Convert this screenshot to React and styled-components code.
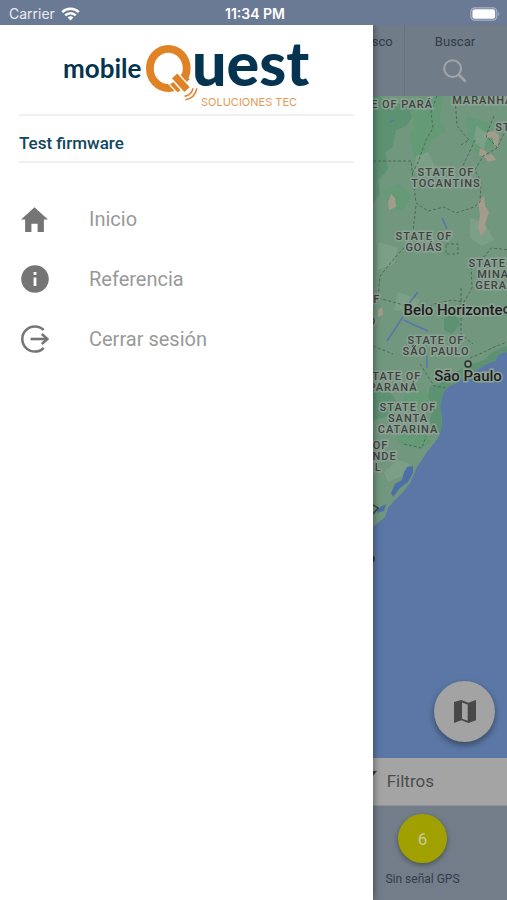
import React, { useState } from 'react';
import styled, { createGlobalStyle } from 'styled-components';
import { IoMdHome, IoMdInformationCircle } from 'react-icons/io';

function App() {

    const [menuOpen, setMenuOpen] = useState(true);

    return (
        <Page>
            <GlobalStyle />

            <StatusBar>
                <Carrier>
                    Carrier
                    <WifiIcon />
                </Carrier>
                <Time>11:34 PM</Time>
                <BatteryWrap>
                    <BatteryIcon />
                </BatteryWrap>
            </StatusBar>

            <Content>
                <Toolbar>
                    <Tool />
                    <Tool />
                    <Tool />
                    <Tool>Auto-refresco</Tool>
                    <Tool divided>
                        Buscar
                        <SearchIcon />
                    </Tool>
                </Toolbar>

                <MapArea>
                    <BrazilMap />
                    <MapButton aria-label="Tipo de mapa">
                        <MapIcon />
                    </MapButton>
                </MapArea>

                <FilterBar>
                    <FilterButton>
                        <FunnelIcon />
                        Filtros
                    </FilterButton>
                </FilterBar>

                <Summary>
                    <SummaryItem />
                    <SummaryItem />
                    <SummaryItem>
                        <Count>6</Count>
                        Sin señal GPS
                    </SummaryItem>
                </Summary>

                <Drawer show={menuOpen}>
                    <LogoWrap>
                        <Logo />
                    </LogoWrap>
                    <UserName>Test firmware</UserName>
                    <Menu>
                        <MenuLink href="#" onClick={() => setMenuOpen(false)}>
                            <IoMdHome size={33} />
                            Inicio
                        </MenuLink>
                        <MenuLink href="#">
                            <IoMdInformationCircle size={34} />
                            Referencia
                        </MenuLink>
                        <MenuLink href="#">
                            <LogoutIcon />
                            Cerrar sesión
                        </MenuLink>
                    </Menu>
                </Drawer>
            </Content>
        </Page>
    )
}

export default App

function WifiIcon() {
    return (
        <svg width="19" height="14" viewBox="0 0 19 14" fill="none" stroke="#fff" strokeWidth="2.5">
            <path d="M1.2 5.2a11.8 11.8 0 0 1 16.6 0" />
            <path d="M4.2 8.4a7.5 7.5 0 0 1 10.6 0" />
            <path d="M9.5 13.6l-2.9-3a4.1 4.1 0 0 1 5.8 0z" fill="#fff" stroke="none" />
        </svg>
    )
}

function BatteryIcon() {
    return (
        <svg width="31" height="14" viewBox="0 0 31 14">
            <rect x="0.8" y="0.8" width="26" height="12.4" rx="4" fill="none" stroke="#a9b3c4" strokeWidth="1.2" />
            <rect x="2.4" y="2.2" width="22.8" height="9.6" rx="2.4" fill="#fff" />
            <path d="M28.4 4.8q2 2.2 0 4.4z" fill="#a9b3c4" />
        </svg>
    )
}

function SearchIcon() {
    return (
        <svg width="24" height="24" viewBox="0 0 24 24" fill="none" stroke="#a3a5a8" strokeWidth="2">
            <circle cx="9.6" cy="9.6" r="8.4" />
            <path d="M15.6 15.6l7 7" strokeWidth="2.6" />
        </svg>
    )
}

function MapIcon() {
    return (
        <svg width="22" height="23" viewBox="0 0 22 23" fill="#484848">
            <path fillRule="evenodd" d="M0 2l7.3-2 7.2 2.7L22 0v20.3l-7.5 2.6-7.2-2.6L0 22.9zM8 2.4v16.3l5.7 2.1V4.5z" />
        </svg>
    )
}

function FunnelIcon() {
    return (
        <svg width="24" height="20" viewBox="0 0 24 20" fill="#3c3c3c">
            <path d="M0 0h24l-9 11v9l-6-4v-5z" />
        </svg>
    )
}

function LogoutIcon() {
    return (
        <svg width="28" height="28" viewBox="0 0 28 28" fill="none" stroke="#757575" strokeWidth="2.5">
            <path d="M22.7 5A12.6 12.6 0 1 0 22.7 23" />
            <path d="M9.5 14H26" strokeWidth="2.6" />
            <path d="M20.8 9l5.6 5-5.6 5" />
        </svg>
    )
}

function Logo() {
    return (
        <svg width="250" height="68" viewBox="0 0 250 68" role="img" aria-label="mobileQuest soluciones tec">
            <g fill="#04344f" fontFamily="Lato, sans-serif">
                <text x="1" y="36" fontSize="26" fontWeight="700">mobile</text>
                <text x="130" y="44" fontSize="61" fontWeight="900">uest</text>
            </g>
            <ellipse cx="106.3" cy="26.4" rx="18.4" ry="19.6" fill="none" stroke="#e08327" strokeWidth="7.8" />
            {/* plug */}
            <g transform="translate(119 41) rotate(48)">
                <path d="M-9-5.2H9V5.2H-9z" fill="#fff" />
                <path d="M-8 8.8H8V10.2H-8z" fill="#fff" />
                <path d="M-9.5-3.6H9V3.6H-9.5z" fill="#e08327" />
                <path d="M-6.5-9H3v3.8h-9.5zM-6 5.2H5v3.6H-6z" fill="#e08327" />
            </g>
            <g fill="none" stroke="#e08327" strokeWidth="1.6">
                <path d="M122.6 54.4q7-1.4 8.4-8" />
                <path d="M123.4 57.8q9.6-1.6 11.4-11.4" />
            </g>
            <text x="139" y="64" fontSize="11" fill="#e39a55" fontFamily="Inter, sans-serif">SOLUCIONES TEC</text>
        </svg>
    )
}

const stateLabels = [
    { x: 402, y: 12, lines: ['E OF PARÁ'] },
    { x: 487, y: 8, lines: ['MARANHÃO'] },
    { x: 503, y: 35, lines: ['ST'] },
    { x: 446, y: 80, lines: ['STATE OF', 'TOCANTINS'] },
    { x: 424, y: 144, lines: ['STATE OF', 'GOIÁS'] },
    { x: 497, y: 171, lines: ['STATE OF', 'MINAS', 'GERAIS'] },
    { x: 352, y: 207, lines: ['STATE OF'] },
    { x: 352, y: 229, lines: ['GROSSO'] },
    { x: 436, y: 248, lines: ['STATE OF', 'SÃO PAULO'] },
    { x: 393, y: 284, lines: ['STATE OF', 'PARANÁ'] },
    { x: 408, y: 315, lines: ['STATE OF', 'SANTA', 'CATARINA'] },
    { x: 360, y: 353, lines: ['STATE OF', 'RIO GRANDE', 'DO SUL'] },
]

function BrazilMap() {
    return (
        <MapSvg viewBox="0 0 507 662" preserveAspectRatio="xMaxYMin slice">
            <rect width="507" height="662" fill="#5b77a5" />
            <path
                fill="#71987f"
                d="M0 0H507V256L499 258 495 265 486 268 477 274 466 279 457 287 449 290 443 297 440 311 442 324 441 335 438 342 427 356 417 371 410 387 403 396 393 406 388 412 385 421 373 431 340 470 0 490z"
            />
            {/* forest */}
            <g fill="#5c9271">
                <path d="M340 0h40l6 8h22l4 14-6 8-10 4-4 18-6 4 2 18-10 10 2 14-8 10-32 10z" />
                <path d="M507 256L499 258 495 265 486 268 477 274 466 279 457 287 449 290 443 297 440 311 442 324 441 335 436 340 430 326 432 310 428 300 430 290 440 288 446 278 460 274 472 268 484 264 492 256 507 250z" />
                <path d="M373 290l14 2 10 14-8 14-16 4zM444 220l12-4 4 12-8 10-8-4z" />
            </g>
            <g fill="#659a77">
                <path d="M408 8l16-8h20l-4 22 6 14-14 8-8 22-10-4-4-22 4-12zM466 20l22 6 8 22-18 10-10-14zM384 94l16-6 12 12-8 14-16-2z" />
                <path d="M404 300l22-6 4 12-14 8-14-4zM396 336l30 2 6 8-14 8-20-6z" />
            </g>
            <g fill="#7c9f87">
                <path d="M416 60l12-4 8 16-10 10-12-6zM476 30l12 8-4 16-10-8zM378 146l20 6-4 16-16 6zM470 122l14 4 10 18-12 6-12-8z" />
                <path d="M398 196l22 8-6 12-20-2zM398 364l12 4-8 12-14 6-4-10z" />
            </g>
            <g fill="#a39c8c">
                <path d="M483 40l5-4 6-1 5 4-1 12-4-1-1-8-7-1zM478 106l6-6 1 10 4 6-4 12 1 6-5 6-3-9 2-12zM388 106l3-8 4 4 1 9-7 3zM480 52l7 4-2 5-6-2zM378 214l4-3 1 8-5 2zM484 60l8-2 4 6-8 2z" />
            </g>
            {/* rivers and lagoons */}
            <path fill="#4d6fa8" d="M404 376l3-5 6-1 0 7-5 9-8 6-7 9-2-4 4-9 7-4zM377 413l9-5-2 7-7 2z" />
            <g fill="none" stroke="#5776a7" strokeWidth="1.5">
                <path d="M387 245l8-12 11-17 4-10 8-10M404 224l8 4 16 7M442 122l5 11M390 26l4-2M427 260v12" />
            </g>
            <g fill="none" stroke="#4f6a5a" strokeWidth="1" strokeDasharray="3 2">
                <path d="M373 65h38l5 42 12 8 16-4 12 6 18-6 6-5 1-20-6-12 8-14 14-8 10-20M437 0l-6 16 2 16-7 12-8 22-6 12M455 0l2 30 12 14-10 6M416 110l-4 34-14 14-18 22-2 22 22 6 20 8 14-8 18-4 12 2 8-14-1-24 14-8 6-8 20 2 16-12M446 148h12v10h-12zM461 192v46l12 10M420 268l14 22 12 2M470 262l14-6 8-4 15-6M404 348l18 4 4-12M373 250l20 8" />
                <path d="M475 44l-14 30 4 18M494 20l-8 20 12 12" />
            </g>
            <path d="M370 407l8 5-5 6" fill="none" stroke="#35453d" strokeWidth="1.4" />
            <StateText>
                {stateLabels.map(({ x, y, lines }) =>
                    lines.map((line, i) => (
                        <text key={x + line} x={x} y={y + i * 11}>{line}</text>
                    ))
                )}
            </StateText>
            <CityText>
                <text x="453" y="219">Belo Horizonte</text>
                <text x="468" y="285">São Paulo</text>
            </CityText>
            <g fill="#8d9b91" stroke="#26302b" strokeWidth="1.5">
                <circle cx="468" cy="268" r="3" />
                <circle cx="507" cy="214" r="3" />
                <circle cx="371" cy="463" r="3" />
            </g>
        </MapSvg>
    )
}

const GlobalStyle = createGlobalStyle`
    body{
        margin: 0;
        font-family: Roboto, sans-serif;
    }

    *{
        box-sizing: border-box;
    }

    button{
        border: 0;
        padding: 0;
        font-family: inherit;
        cursor: pointer;
    }
`

const Page = styled.div`
    min-height: 100vh;
    display: flex;
    flex-direction: column;
    overflow: hidden;
`

const StatusBar = styled.header`
    height: 25px;
    display: grid;
    grid-template-columns: 1fr auto 1fr;
    align-items: center;
    padding: 2px 6px 0 9px;
    background-color: #6b7a94;
    color: #fff;
    font-family: Inter, sans-serif;
    font-size: 14px;
`

const Carrier = styled.div`
    display: flex;
    align-items: center;
    gap: 6px;
    color: #e8ebf0;
`

const Time = styled.div`
    font-weight: 600;
`

const BatteryWrap = styled.div`
    display: flex;
    justify-content: flex-end;
`

const Content = styled.main`
    position: relative;
    flex: 1;
    display: flex;
    flex-direction: column;
`

const Toolbar = styled.div`
    height: 71px;
    display: grid;
    grid-template-columns: repeat(5, 1fr);
    padding-right: 2px;
    background-color: #717c89;
`

const Tool = styled.button`
    display: flex;
    flex-direction: column;
    align-items: center;
    gap: 10px;
    padding-top: 10px;
    background: none;
    border-left: ${props => props.divided ? '1px solid #687380' : '0'};
    color: #333b47;
    font-size: 13px;
    line-height: 14px;
    white-space: nowrap;
`

const MapArea = styled.section`
    position: relative;
    flex: 1;
    min-height: 300px;
    overflow: hidden;
    background-color: #5b77a5;
`

const MapSvg = styled.svg`
    position: absolute;
    width: 100%;
    height: 100%;
`

const StateText = styled.g`
    font-size: 11px;
    font-weight: 500;
    letter-spacing: 1px;
    text-anchor: middle;
    fill: #3b4540;
    stroke: #8fa295;
    stroke-width: 3px;
    paint-order: stroke;
`

const CityText = styled.g`
    font-size: 15px;
    font-weight: 500;
    text-anchor: middle;
    fill: #1b1f1d;
    stroke: #8fa295;
    stroke-width: 3px;
    paint-order: stroke;
`

const MapButton = styled.button`
    position: absolute;
    right: 12px;
    bottom: 16px;
    width: 61px;
    height: 61px;
    display: flex;
    align-items: center;
    justify-content: center;
    border-radius: 50%;
    background-color: #a3a3a3;
    box-shadow: 0 3px 6px rgba(0, 0, 0, .4);
`

const FilterBar = styled.div`
    height: 48px;
    display: flex;
    justify-content: flex-end;
    padding: 0 73px 2px 0;
    background-color: #a4a4a4;
    border-bottom: 1px solid #8d9298;
`

const FilterButton = styled.button`
    display: flex;
    align-items: center;
    gap: 10px;
    background: none;
    color: #4c4c4c;
    font-size: 17px;
`

const Summary = styled.div`
    height: 94px;
    display: grid;
    grid-template-columns: repeat(3, 1fr);
    background-color: #727d89;
`

const SummaryItem = styled.div`
    display: flex;
    flex-direction: column;
    align-items: center;
    gap: 9px;
    padding-top: 8px;
    color: #333b47;
    font-size: 12px;
    line-height: 14px;
`

const Count = styled.div`
    width: 49px;
    height: 49px;
    display: flex;
    align-items: center;
    justify-content: center;
    border-radius: 50%;
    background-color: #a0a000;
    color: #c9c9a6;
    font-size: 17px;
    box-shadow: 0 2px 5px rgba(0, 0, 0, .35);
`

const Drawer = styled.nav`
    position: absolute;
    top: 0;
    bottom: 0;
    left: 0;
    width: calc(100% - 134px);
    padding: 0 19px;
    background-color: #fff;
    box-shadow: 0 0 8px rgba(0, 0, 0, .5);
    clip-path: inset(0 -16px 0 0);
    transform: ${props => props.show ? 'none' : 'translateX(-110%)'};
    transition: transform .3s ease-in-out;
`

const LogoWrap = styled.div`
    height: 91px;
    display: flex;
    justify-content: center;
    padding-top: 17px;
    border-bottom: 2px solid #f0f0f0;
`

const UserName = styled.div`
    height: 47px;
    display: flex;
    align-items: center;
    border-bottom: 2px solid #f0f0f0;
    padding-top: 8px;
    color: #124660;
    font-size: 17px;
    font-weight: 500;
`

const Menu = styled.div`
    display: flex;
    flex-direction: column;
    padding-top: 26px;
`

const MenuLink = styled.a`
    height: 60px;
    display: grid;
    grid-template-columns: 31px 1fr;
    align-items: center;
    column-gap: 39px;
    color: #999;
    font-size: 20px;
    text-decoration: none;

    svg{
        justify-self: center;
        color: #757575;
    }
`
